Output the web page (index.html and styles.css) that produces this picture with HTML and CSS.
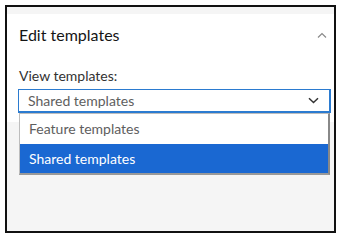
FILE: index.html
```html
<!DOCTYPE html>
<html lang="en">
<head>
    <meta charset="UTF-8">
    <title>Edit templates</title>
    <link rel="stylesheet" href="styles.css">
</head>
<body>
    <div class="frame">
        <div class="panel">
            <div class="head">
                <p class="title">Edit templates</p>
                <svg class="chev-up" width="10" height="6" viewBox="0 0 10 6">
                    <path d="M1 5.5 L5 1.5 L9 5.5" fill="none" stroke="#8a8a8a" stroke-width="1.2"/>
                </svg>
            </div>
            <p class="label">View templates:</p>
            <div class="select-wrap">
                <div class="select">
                    <span>Shared templates</span>
                    <svg width="11" height="7" viewBox="0 0 11 7">
                        <path d="M1 1.2 L5.5 5.5 L10 1.2" fill="none" stroke="#333" stroke-width="1.5"/>
                    </svg>
                </div>
                <ul class="menu">
                    <li class="opt">Feature templates</li>
                    <li class="opt opt-on">Shared templates</li>
                </ul>
            </div>
        </div>
    </div>
</body>
</html>
```

FILE: styles.css
```css
body {
    margin: 0;
    background: #fff;
    font-family: Lato, "Open Sans", sans-serif;
    color: #323232;
}

.frame {
    margin: 5px;
    width: 327px;
    height: 217px;
    border: 2px solid #111;
    background: #f5f5f5;
    padding-top: 7px;
}

.panel {
    background: #fff;
    height: 108px;
    padding: 0 3px 0 12px;
}

.head {
    display: flex;
    justify-content: space-between;
    align-items: center;
    padding-top: 11px;
}

.title {
    margin: 0;
    font-size: 16px;
    line-height: 20px;
    color: #151515;
}

.chev-up {
    margin-right: 4px;
}

.label {
    margin: 22px 0 0;
    font-size: 14px;
    line-height: 18px;
    color: #323232;
}

.select-wrap {
    position: relative;
    margin: 4px 0 0 -1px;
}

.select {
    height: 21px;
    border: 2px solid #2b7bd0;
    border-width: 1px 2px 2px 1px;
    display: flex;
    align-items: center;
    justify-content: space-between;
    padding: 0 10px 0 9px;
    font-size: 14px;
    color: #5e5e5e;
}

.menu {
    position: absolute;
    left: 1px;
    right: 1px;
    top: 24px;
    margin: 0;
    padding: 0;
    list-style: none;
    background: #fff;
    border: 1px solid #bdbdbd;
    border-right: 2px solid #888;
    border-bottom: 2px solid #999;
}

.opt {
    height: 30px;
    line-height: 30px;
    padding-left: 9px;
    font-size: 14px;
    color: #5e5e5e;
}

.opt-on {
    background: #1a68d2;
    color: #fff;
    height: 29px;
    line-height: 29px;
}
```
